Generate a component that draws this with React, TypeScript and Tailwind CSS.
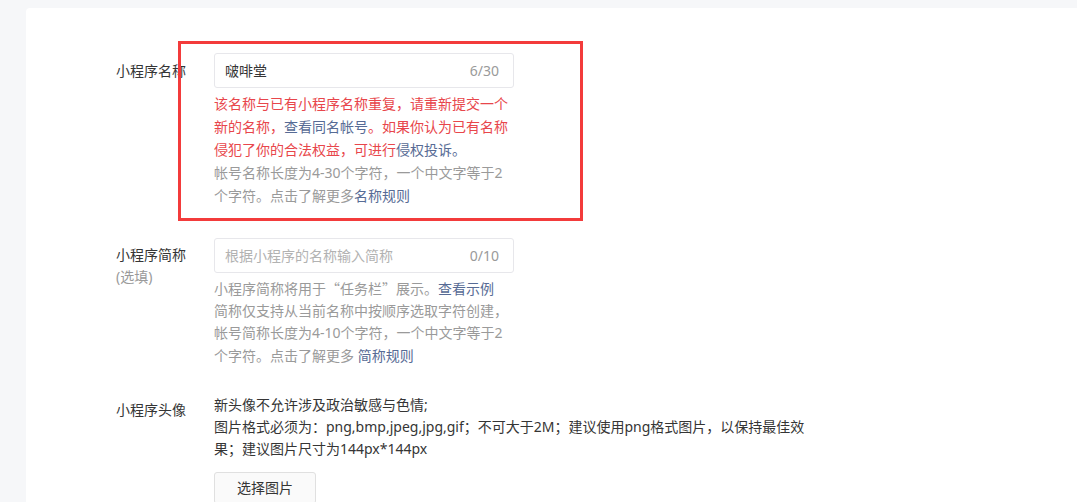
const font = { fontFamily: '"Noto Sans", "Noto Sans CJK SC", sans-serif' };

const Link = ({ children }: { children: React.ReactNode }) => (
  <span className="text-[#576b95]">{children}</span>
);

const App = () => {
  return (
    <div
      className="min-h-screen bg-[#f6f7f9] pl-[26px] pt-[8px] text-[14px] text-[#353535]"
      style={font}
    >
      <div className="relative min-h-[494px] rounded-tl-[4px] bg-white pl-[90px] pt-[45px]">
        {/* annotation box */}
        <div className="absolute left-[152px] top-[33px] h-[180px] w-[405px] border-[3px] border-[#f33b3b]" />

        {/* name */}
        <div className="flex">
          <div className="w-[98px] shrink-0 pt-[6px] leading-[23px]">小程序名称</div>
          <div className="w-[300px]">
            <div className="flex h-[35px] items-center justify-between rounded-[3px] border border-[#e7e7eb] pl-[10px] pr-[14px]">
              <span>啵啡堂</span>
              <span className="text-[#9a9a9a]">6/30</span>
            </div>
            <div className="mt-[4px] whitespace-nowrap leading-[23px]">
              <div className="text-[#e8464b]">该名称与已有小程序名称重复，请重新提交一个</div>
              <div className="text-[#e8464b]">
                新的名称，<Link>查看同名帐号</Link>。如果你认为已有名称
              </div>
              <div className="text-[#e8464b]">
                侵犯了你的合法权益，可进行<Link>侵权投诉。</Link>
              </div>
              <div className="text-[#9a9a9a]">帐号名称长度为4-30个字符，一个中文字等于2</div>
              <div className="text-[#9a9a9a]">
                个字符。点击了解更多<Link>名称规则</Link>
              </div>
            </div>
          </div>
        </div>

        {/* short name */}
        <div className="mt-[31px] flex">
          <div className="w-[98px] shrink-0 pt-[6px] leading-[22px]">
            <div>小程序简称</div>
            <div className="text-[#9a9a9a]">(选填)</div>
          </div>
          <div className="w-[300px]">
            <div className="flex h-[35px] items-center justify-between rounded-[3px] border border-[#e7e7eb] pl-[10px] pr-[14px]">
              <span className="text-[#b2b2b2]">根据小程序的名称输入简称</span>
              <span className="text-[#9a9a9a]">0/10</span>
            </div>
            <div className="mt-[4px] whitespace-nowrap leading-[22.5px] text-[#9a9a9a]">
              <div className="font-['Noto_Sans_CJK_SC',sans-serif]">
                小程序简称将用于“任务栏”展示。<Link>查看示例</Link>
              </div>
              <div>简称仅支持从当前名称中按顺序选取字符创建，</div>
              <div>帐号简称长度为4-10个字符，一个中文字等于2</div>
              <div>
                个字符。点击了解更多 <Link>简称规则</Link>
              </div>
            </div>
          </div>
        </div>

        {/* avatar */}
        <div className="mt-[27px] flex">
          <div className="w-[98px] shrink-0 pt-[5px] leading-[22px]">小程序头像</div>
          <div className="whitespace-nowrap leading-[22px]">
            <div>新头像不允许涉及政治敏感与色情;</div>
            <div>图片格式必须为：png,bmp,jpeg,jpg,gif；不可大于2M；建议使用png格式图片，以保持最佳效</div>
            <div>果；建议图片尺寸为144px*144px</div>
            <button className="mt-[12px] h-[32px] w-[102px] rounded-[3px] border border-[#e0e0e0] bg-[#fafafa] text-[#353535]">
              选择图片
            </button>
          </div>
        </div>
      </div>
    </div>
  );
};

export default App;
